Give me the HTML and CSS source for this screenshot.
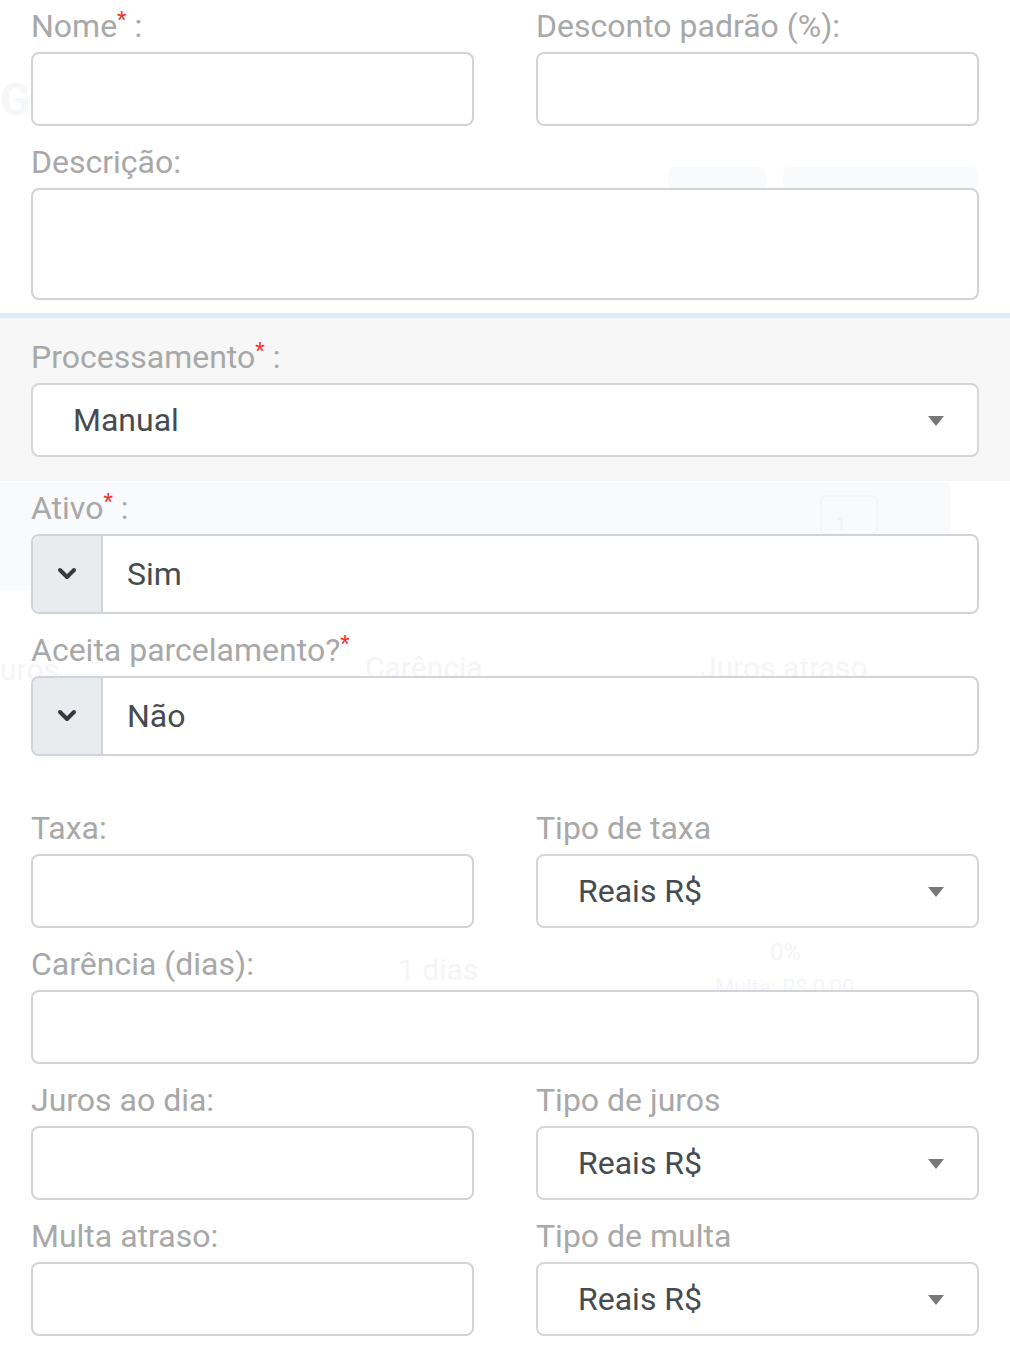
FILE: index.html
```html
<!doctype html>
<html lang="pt-BR">
    <head>
        <meta charset="utf-8">
        <title>Forma de pagamento</title>
        <link rel="stylesheet" href="styles.css">
    </head>
    <body>
        <!-- pagina de fundo, vista atraves do modal -->
        <div class="backdrop" aria-hidden="true">
            <div class="backdrop__title">GA</div>
            <div class="backdrop__btn backdrop__btn--small"></div>
            <div class="backdrop__btn backdrop__btn--wide"></div>
            <div class="backdrop__panel"></div>
            <div class="backdrop__page">1</div>
            <div class="backdrop__text backdrop__text--juros">uros</div>
            <div class="backdrop__text backdrop__text--carencia">Carência</div>
            <div class="backdrop__text backdrop__text--atraso">Juros atraso</div>
            <div class="backdrop__text backdrop__text--dias">1 dias</div>
            <div class="backdrop__text backdrop__text--pct">0%</div>
            <div class="backdrop__text backdrop__text--multa">Multa: R$ 0,00</div>
        </div>

        <form class="form">
            <div class="form__row">
                <div class="field">
                    <label class="field__label">Nome<span class="field__req">*</span> :</label>
                    <input class="field__input" type="text">
                </div>
                <div class="field">
                    <label class="field__label">Desconto padrão (%):</label>
                    <input class="field__input" type="text">
                </div>
            </div>

            <div class="field">
                <label class="field__label">Descrição:</label>
                <textarea class="field__input field__input--area"></textarea>
            </div>

            <div class="form__band">
                <div class="field field--last">
                    <label class="field__label">Processamento<span class="field__req">*</span> :</label>
                    <div class="field__select">Manual</div>
                </div>
            </div>

            <div class="field">
                <label class="field__label">Ativo<span class="field__req">*</span> :</label>
                <div class="field__group">
                    <span class="field__addon">
                        <svg width="20" height="14" viewBox="0 0 20 14"><polyline points="3,3 10,10 17,3" fill="none" stroke="#343a40" stroke-width="4" stroke-linecap="round" stroke-linejoin="round"/></svg>
                    </span>
                    <span class="field__value">Sim</span>
                </div>
            </div>

            <div class="field">
                <label class="field__label">Aceita parcelamento?<span class="field__req">*</span></label>
                <div class="field__group">
                    <span class="field__addon">
                        <svg width="20" height="14" viewBox="0 0 20 14"><polyline points="3,3 10,10 17,3" fill="none" stroke="#343a40" stroke-width="4" stroke-linecap="round" stroke-linejoin="round"/></svg>
                    </span>
                    <span class="field__value">Não</span>
                </div>
            </div>

            <div class="form__row form__row--spaced">
                <div class="field">
                    <label class="field__label">Taxa:</label>
                    <input class="field__input" type="text">
                </div>
                <div class="field">
                    <label class="field__label">Tipo de taxa</label>
                    <div class="field__select">Reais R$</div>
                </div>
            </div>

            <div class="field">
                <label class="field__label">Carência (dias):</label>
                <input class="field__input" type="text">
            </div>

            <div class="form__row">
                <div class="field">
                    <label class="field__label">Juros ao dia:</label>
                    <input class="field__input" type="text">
                </div>
                <div class="field">
                    <label class="field__label">Tipo de juros</label>
                    <div class="field__select">Reais R$</div>
                </div>
            </div>

            <div class="form__row">
                <div class="field">
                    <label class="field__label">Multa atraso:</label>
                    <input class="field__input" type="text">
                </div>
                <div class="field">
                    <label class="field__label">Tipo de multa</label>
                    <div class="field__select">Reais R$</div>
                </div>
            </div>
        </form>
    </body>
</html>
```

FILE: styles.css
```css
* {
    box-sizing: border-box;
}

body {
    background: #fff;
    font-family: Roboto, "Liberation Sans", sans-serif;
    margin: 0;
    min-height: 1359px;
    overflow: hidden;
    position: relative;
}

/* fundo esmaecido */
.backdrop {
    inset: 0;
    position: absolute;
    z-index: 0;
}

.backdrop__title {
    color: #f6f7f9;
    font-size: 44px;
    font-weight: 700;
    left: 0;
    position: absolute;
    top: 74px;
}

.backdrop__btn {
    background: #f9fafc;
    border-radius: 6px;
    height: 22px;
    position: absolute;
    top: 167px;
}

.backdrop__btn--small {
    left: 668px;
    width: 98px;
}

.backdrop__btn--wide {
    left: 783px;
    width: 195px;
}

.backdrop__panel {
    background: #f9fafc;
    height: 108px;
    left: 0;
    position: absolute;
    top: 482px;
    width: 950px;
}

.backdrop__page {
    border: 2px solid #f2f4f7;
    border-radius: 6px;
    color: #f0f2f5;
    font-size: 18px;
    height: 40px;
    left: 820px;
    padding: 16px 0 0 14px;
    position: absolute;
    top: 495px;
    width: 58px;
}

.backdrop__text {
    color: #f4f5f7;
    font-size: 30px;
    position: absolute;
}

.backdrop__text--juros {
    left: 0;
    top: 652px;
}

.backdrop__text--carencia {
    left: 365px;
    top: 650px;
}

.backdrop__text--atraso {
    left: 700px;
    top: 650px;
}

.backdrop__text--dias {
    left: 398px;
    top: 952px;
}

.backdrop__text--pct {
    font-size: 24px;
    left: 770px;
    top: 938px;
}

.backdrop__text--multa {
    font-size: 22px;
    left: 715px;
    top: 975px;
}

/* formulario */
.form {
    padding: 6px 31px 0;
    position: relative;
    z-index: 1;
}

.form__row {
    display: grid;
    gap: 0 62px;
    grid-template-columns: 1fr 1fr;
}

.form__row--spaced {
    margin-top: 52px;
}

.form__band {
    background: #f7f7f7;
    border-top: 5px solid #deeafa;
    margin: -3px -31px 7px;
    padding: 19px 31px 24px;
}

.field {
    margin-bottom: 16px;
}

.field--last {
    margin-bottom: 0;
}

.field__label {
    color: #a8a8a8;
    display: block;
    font-size: 32px;
    line-height: 40px;
    margin-bottom: 6px;
}

.field__req {
    color: #f5332f;
    font-size: 22px;
    line-height: 0;
    vertical-align: 10px;
}

.field__input {
    background: #fff;
    border: 2px solid #d0d4d9;
    border-radius: 8px;
    display: block;
    font-family: inherit;
    height: 74px;
    width: 100%;
}

.field__input--area {
    height: 112px;
    resize: none;
}

.field__select {
    align-items: center;
    background: #fff;
    border: 2px solid #d6d6d6;
    border-radius: 8px;
    color: #464b50;
    display: flex;
    font-size: 32px;
    height: 74px;
    padding: 0 0 0 40px;
    position: relative;
}

.field__select::after {
    border-left: 8px solid transparent;
    border-right: 8px solid transparent;
    border-top: 10px solid #777;
    content: "";
    position: absolute;
    right: 33px;
    top: 31px;
}

.field__group {
    background: #fff;
    border: 2px solid #d0d4d9;
    border-radius: 8px;
    display: flex;
    height: 80px;
    overflow: hidden;
}

.field__addon {
    align-items: center;
    background: #e9ecef;
    border-right: 2px solid #d0d4d9;
    display: flex;
    justify-content: center;
    width: 70px;
}

.field__value {
    align-items: center;
    color: #464b50;
    display: flex;
    font-size: 32px;
    padding-left: 24px;
}
```
